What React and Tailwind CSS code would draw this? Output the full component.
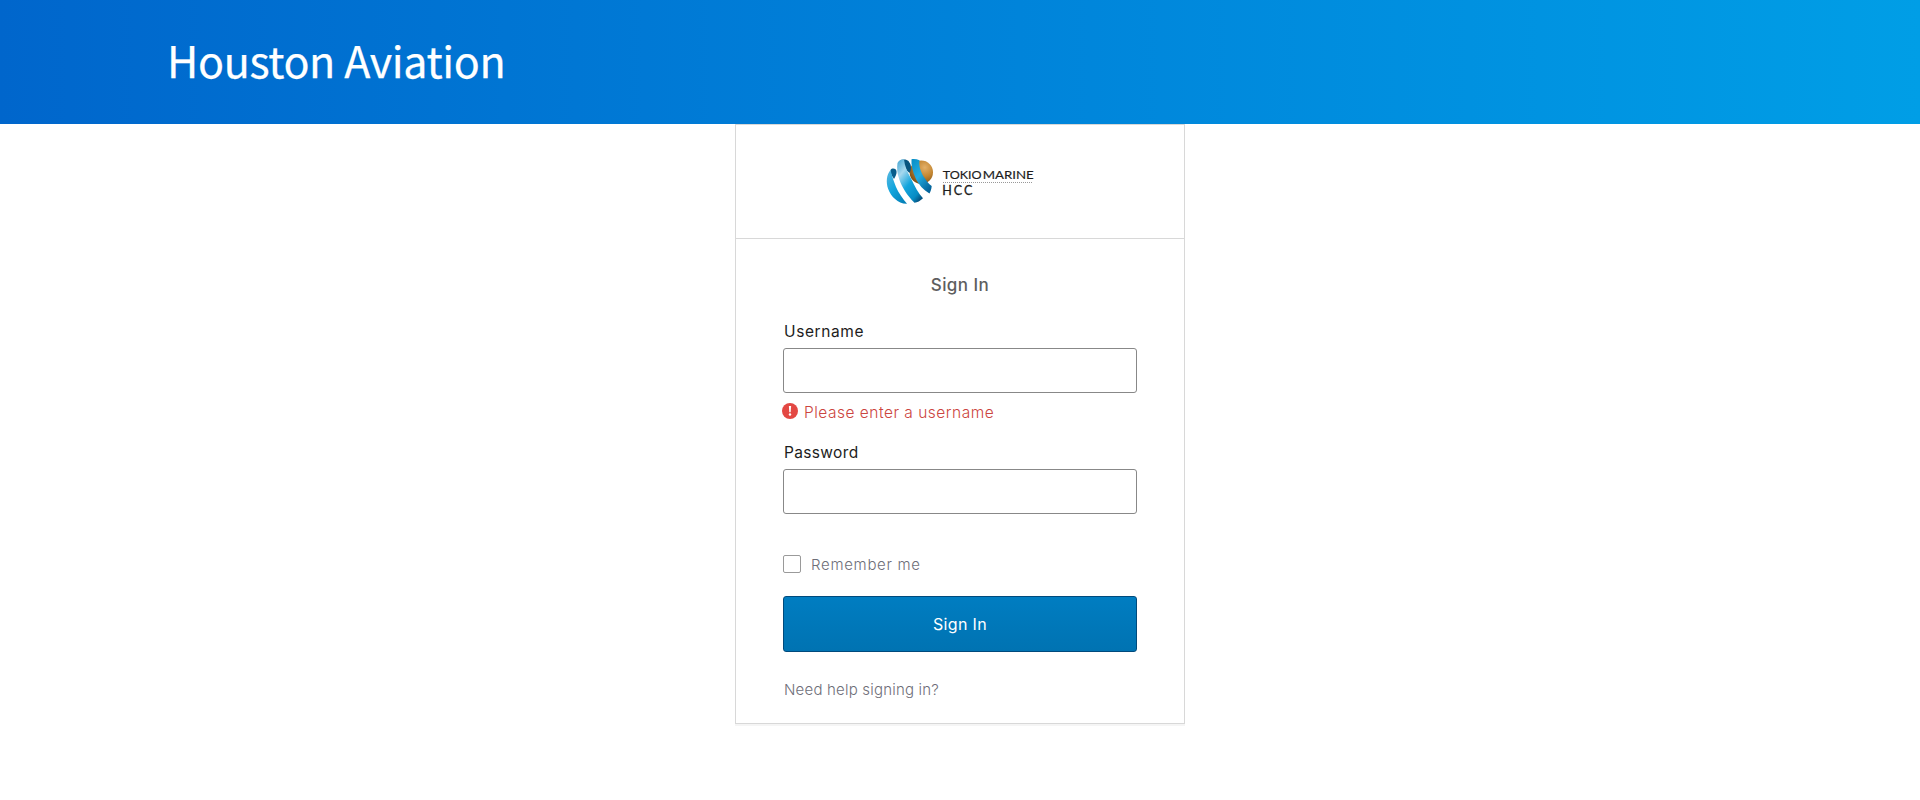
function Logo() {
  return (
    <svg width="150" height="48" viewBox="0 0 150 48" role="img" aria-label="Tokio Marine HCC">
      <defs>
        <radialGradient id="gold" cx="0.65" cy="0.3" r="0.75">
          <stop offset="0" stopColor="#e3b068" />
          <stop offset="0.5" stopColor="#c38632" />
          <stop offset="1" stopColor="#7d4e12" />
        </radialGradient>
        <linearGradient id="ribbon" x1="0" y1="0" x2="0.8" y2="1">
          <stop offset="0" stopColor="#5cb8e0" />
          <stop offset="0.5" stopColor="#12a5dd" />
          <stop offset="1" stopColor="#0480b8" />
        </linearGradient>
        <linearGradient id="ribbonMid" x1="0.1" y1="0" x2="0.8" y2="1">
          <stop offset="0" stopColor="#4fabd6" />
          <stop offset="0.25" stopColor="#a6d8ee" />
          <stop offset="0.55" stopColor="#12a5dd" />
          <stop offset="0.85" stopColor="#078cc4" />
          <stop offset="1" stopColor="#04517f" />
        </linearGradient>
        <linearGradient id="ribbonFront" x1="0" y1="0" x2="0.7" y2="1">
          <stop offset="0" stopColor="#078dc4" />
          <stop offset="0.5" stopColor="#22ade2" />
          <stop offset="1" stopColor="#04659c" />
        </linearGradient>
      </defs>
      <circle cx="36.300" cy="14.200" r="11.700" fill="url(#gold)" />
      <path d="M5.500 12C7 10 10.500 10 11.500 13C12 15.500 10.500 18.500 9 21C7 18 5 15 5.500 12Z" fill="#075d8b" />
      <path d="M5.500 12C1.500 17 .8 24 3.200 31C6 38.500 13 46 22 45.700C18 41 13.500 35 11 29C9 24 7 18 5.500 12Z" fill="url(#ribbon)" />
      <path d="M16 2C19 .8 22 1.500 23.500 3C25.500 6 27.500 9 24.500 15C21.500 13 19 8 16 2Z" fill="#07547f" />
      <path d="M12.500 5C13.500 2.500 16.500 1 19 1.300C19.500 8 22.500 14.500 26 20.500C29.500 28 33.500 35.500 38 40.300C35 43 32.500 44.700 29.500 44.700C22 37.500 17 29 14.500 22C12 15.500 11.800 10 12.500 5Z" fill="url(#ribbonMid)" />
      <path d="M26.500 1.300C29 .8 32 1.300 34.500 2.200C33.500 8 36 15 40 20.500C42 23.500 44 26.500 46.700 28C46.500 31 45.500 33.500 44.500 35.500C38.500 32 33.500 26.500 30.500 20C27.500 13 26 7 26.500 1.300Z" fill="url(#ribbonFront)" />
      <g fontFamily="Lato, sans-serif" fill="#1c1c1c" stroke="#1c1c1c">
        <text x="57.700" y="21.200" textLength="39" lengthAdjust="spacingAndGlyphs" fontSize="11.800" strokeWidth="0.150">TOKIO</text>
        <text x="97.700" y="21.200" textLength="51" lengthAdjust="spacingAndGlyphs" fontSize="11.800" strokeWidth="0.150">MARINE</text>
        <text x="57.300" y="37" textLength="30" fontSize="12.500" strokeWidth="0.300">HCC</text>
      </g>
      <path d="M58 24.500H148" stroke="#999" strokeDasharray="1 1" />
    </svg>
  );
}

function ErrorIcon() {
  return (
    <svg width="16" height="16" viewBox="0 0 16 16" className="shrink-0" aria-hidden="true">
      <circle cx="8" cy="8" r="8" fill="#e34843" />
      <path d="M6.900 3H9.100L8.700 9.200H7.300Z" fill="#fff" />
      <circle cx="8" cy="11.500" r="1.200" fill="#fff" />
    </svg>
  );
}

export default function App() {
  return (
    <div className="min-h-[800px] bg-white font-['Inter',sans-serif] text-[#1d1d21]">
      <header className="flex h-[124px] items-center bg-linear-to-r from-[#0066cc] to-[#009ee6] pb-[5px] pl-[167px]">
        <h1 className="text-[43px] leading-none tracking-[-0.36px] text-white font-['Noto_Sans_CJK_SC',sans-serif] [-webkit-text-stroke:0.25px_white]">Houston Aviation</h1>
      </header>
      <main className="mx-auto h-[600px] w-[450px] border border-[#d8d8d8] shadow-[0_2px_0_rgba(175,175,175,0.12)]">
        <div className="flex h-[114px] justify-center border-b border-[#d8d8d8] pt-[33px]">
          <Logo />
        </div>
        <form className="px-[47px] pt-[35px]">
          <h2 className="h-[22px] text-center text-[17px] leading-[22px] font-medium tracking-[0.45px] text-[#5e5e5e]">Sign In</h2>
          <label className="mt-[25px] block h-5 pl-px text-[15.5px] leading-[21px] tracking-[0.6px]" htmlFor="user">Username</label>
          <input id="user" className="mt-[7px] block h-[45px] w-full rounded-[3px] border border-[#888888] outline-none" />
          <p className="-ml-px mt-2.5 flex h-5 gap-1.5 text-[15.5px] leading-5 font-light tracking-[0.5px] text-[#cc4540]">
            <ErrorIcon />
            <span>Please enter a username</span>
          </p>
          <label className="mt-[19px] block h-5 pl-px text-[15.5px] leading-[21px] tracking-[0.35px]" htmlFor="pass">Password</label>
          <input id="pass" type="password" className="mt-[7px] block h-[45px] w-full rounded-[3px] border border-[#888888] outline-none" />
          <label className="mt-[41px] flex h-[18px] gap-2.5 text-[15px] leading-5 font-light tracking-[0.7px] text-[#6e6e78]">
            <input type="checkbox" className="size-[18px] appearance-none rounded-[2px] border border-[#9a9a9a]" />
            Remember me
          </label>
          <button type="button" className="mt-[23px] block h-14 w-full rounded-[3px] border border-[#004a7c] bg-linear-to-b from-[#007dc1] to-[#0073b2] text-base tracking-[0.35px] text-white">Sign In</button>
          <a className="mt-7 block pl-px text-[15px] leading-5 font-light tracking-[0.2px] text-[#6e6e78]">Need help signing in?</a>
        </form>
      </main>
    </div>
  );
}
